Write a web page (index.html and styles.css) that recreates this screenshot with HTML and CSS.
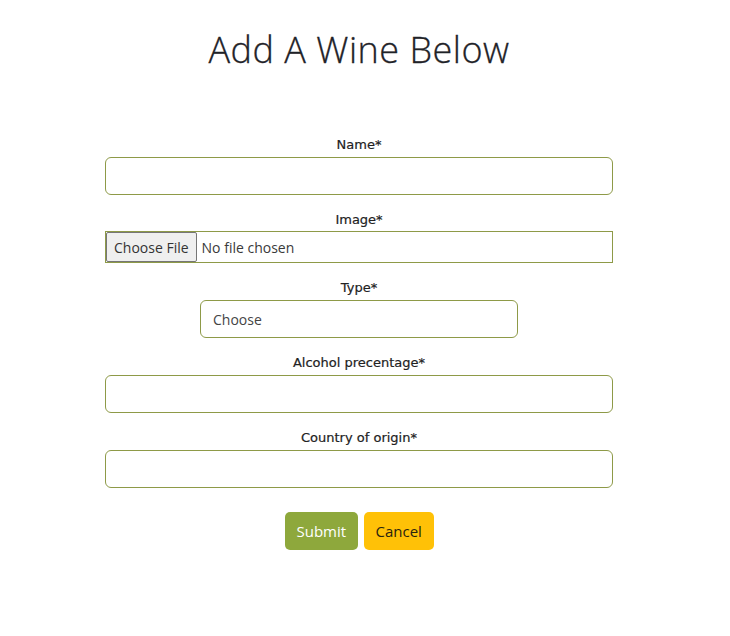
FILE: index.html
```html
<!DOCTYPE html>
<html lang="en">
<head>
<meta charset="utf-8">
<title>Add A Wine</title>
<link rel="stylesheet" href="styles.css">
</head>
<body>
<main class="page">
  <h1 class="title">Add A Wine Below</h1>
  <form class="wine-form">
    <div class="field">
      <label class="label" for="name">Name*</label>
      <input class="input" id="name" type="text">
    </div>
    <div class="field field-file">
      <label class="label">Image*</label>
      <div class="file">
        <span class="file-btn">Choose File</span>
        <span class="file-text">No file chosen</span>
      </div>
    </div>
    <div class="field">
      <label class="label">Type*</label>
      <div class="select">Choose</div>
    </div>
    <div class="field">
      <label class="label" for="alc">Alcohol precentage*</label>
      <input class="input" id="alc" type="text">
    </div>
    <div class="field">
      <label class="label" for="country">Country of origin*</label>
      <input class="input" id="country" type="text">
    </div>
    <div class="actions">
      <button type="button" class="btn btn-submit">Submit</button>
      <button type="button" class="btn btn-cancel">Cancel</button>
    </div>
  </form>
</main>
</body>
</html>
```
FILE: styles.css
```css
* { box-sizing: border-box; }
html, body { margin: 0; padding: 0; background: #fff; }
body { font-family: "Open Sans", "DejaVu Sans", sans-serif; color: #212529; }

.page {
  width: 508px;
  margin-left: 105px;
  display: flex;
  flex-direction: column;
  align-items: center;
}

.title {
  margin: 26px 0 0;
  font-family: "Open Sans", sans-serif;
  font-weight: 300;
  font-size: 36px;
  line-height: 48px;
  color: #1f2328;
  letter-spacing: 0.5px;
  -webkit-text-stroke: 0.3px #1f2328;
}

.wine-form {
  width: 100%;
  margin-top: 62px;
  display: flex;
  flex-direction: column;
  align-items: center;
}

.field {
  width: 100%;
  display: flex;
  flex-direction: column;
  align-items: center;
  margin-bottom: 16px;
}

.label {
  font-family: "DejaVu Sans", sans-serif;
  font-size: 13px;
  font-weight: 400;
  line-height: 18px;
  color: #222;
  margin-bottom: 3px;
  -webkit-text-stroke: 0.2px #222;
}

.field-file .label { margin-bottom: 2px; }

.input {
  width: 100%;
  height: 38px;
  border: 1px solid #8e9a48;
  border-radius: 6px;
  background: #fff;
  padding: 0 12px;
  font: inherit;
}

.file {
  width: 100%;
  height: 32px;
  border: 1px solid #8e9a48;
  display: flex;
  align-items: center;
  font-family: "Open Sans", sans-serif;
  font-size: 14px;
  color: #3a3a3a;
}

.file-btn {
  height: 30px;
  display: flex;
  align-items: center;
  padding: 0 7px;
  background: #efefef;
  border: 1px solid #767676;
  border-radius: 2px;
  color: #333;
}

.file-text { margin-left: 5px; }

.select {
  width: 318px;
  height: 38px;
  border: 1px solid #8e9a48;
  border-radius: 6px;
  padding: 0 12px;
  display: flex;
  align-items: center;
  font-family: "Open Sans", sans-serif;
  font-size: 14px;
  color: #444;
}

.actions {
  margin-top: 8px;
  display: flex;
  gap: 6px;
}

.btn {
  height: 38px;
  border: none;
  border-radius: 5px;
  padding: 0 12px;
  font-family: "Open Sans", sans-serif;
  font-size: 15px;
}

.btn-submit { background: #8ea83c; color: #fff; width: 73px; }
.btn-cancel { background: #ffc107; color: #2a2410; width: 70px; }
```
